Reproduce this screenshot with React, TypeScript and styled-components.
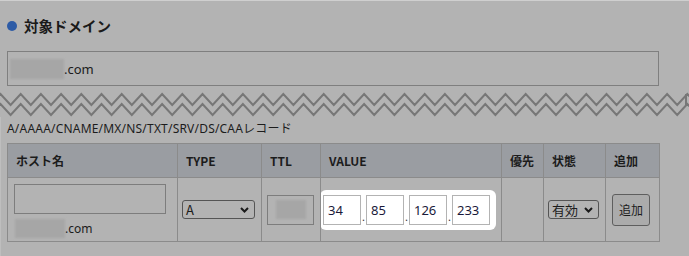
import React from "react";
import styled, { createGlobalStyle } from "styled-components";

const GlobalStyle = createGlobalStyle`
  html, body { margin: 0; padding: 0; background: #b3b3b3; }
  body {
    font-family: "Noto Sans", "Noto Sans CJK JP", sans-serif;
    color: #1c1c1c;
    width: 689px;
    height: 256px;
    overflow: hidden;
  }
`;

const Page = styled.div`
  width: 689px;
  height: 256px;
  border-top: 1px solid #cfcfcf;
  box-sizing: border-box;
  display: flex;
  flex-direction: column;
`;

const TopSection = styled.div`
  padding: 15px 0 0 7px;
  display: flex;
  flex-direction: column;
`;

const Heading = styled.h2`
  margin: 0;
  display: flex;
  align-items: center;
  gap: 7px;
  font-family: "Noto Sans CJK JP", sans-serif;
  font-size: 14.5px;
  font-weight: 700;
  line-height: 20px;
  height: 20px;
  color: #1a1a1a;
`;

const Dot = styled.span`
  width: 10px;
  height: 10px;
  border-radius: 50%;
  background: #2d5ba6;
`;

const DomainBox = styled.div`
  margin-top: 15px;
  width: 652px;
  height: 35px;
  box-sizing: border-box;
  border: 1px solid #7f7f7f;
  display: flex;
  align-items: center;
  padding-left: 2px;
  font-size: 13px;
`;

const Blur = styled.span<{ $w: number; $h: number }>`
  display: inline-block;
  width: ${(p) => p.$w}px;
  height: ${(p) => p.$h}px;
  background: #a6a6a6;
  filter: blur(1.2px);
`;

const Zig = styled.svg`
  display: block;
  margin-top: 4px;
`;

const BottomSection = styled.div`
  border-left: 1px solid #bebebe;
  padding-left: 6px;
  flex: 1;
  display: flex;
  flex-direction: column;
`;

const Caption = styled.div`
  margin-top: 4px;
  font-size: 12px;
  letter-spacing: 0.2px;
  line-height: 16px;
  height: 16px;
  font-family: "Noto Sans", "Noto Sans CJK JP", sans-serif;
`;

const Table = styled.table`
  margin-top: 6px;
  border-collapse: collapse;
  width: 652px;
  table-layout: fixed;
  font-size: 12px;
`;

const Th = styled.th<{ $w: number }>`
  width: ${(p) => p.$w}px;
  height: 34px;
  box-sizing: border-box;
  background: #9a9da2;
  border: 1px solid #8b8b8b;
  text-align: left;
  padding: 0 0 0 8px;
  font-weight: 700;
  font-family: "Noto Sans CJK JP", sans-serif;
  color: #1c1c1c;
`;

const Td = styled.td<{ $pad?: string }>`
  border: 1px solid #8b8b8b;
  height: 64px;
  box-sizing: border-box;
  padding: ${(p) => p.$pad || "0 0 0 5px"};
  vertical-align: middle;
`;

const HostCell = styled.div`
  display: flex;
  flex-direction: column;
  gap: 5px;
  padding-top: 5px;
  padding-bottom: 2px;
`;

const TextInput = styled.div<{ $w: number }>`
  width: ${(p) => p.$w}px;
  height: 30px;
  box-sizing: border-box;
  border: 1px solid #7d7d7d;
  display: flex;
  align-items: center;
  justify-content: center;
`;

const DomainLine = styled.div`
  display: flex;
  align-items: center;
  height: 19px;
  font-size: 12px;
  padding-left: 1px;
`;

const SelectBox = styled.div<{ $w: number }>`
  width: ${(p) => p.$w}px;
  height: 19px;
  box-sizing: border-box;
  border: 1px solid #555;
  border-radius: 3px;
  display: flex;
  align-items: center;
  justify-content: space-between;
  padding: 0 5px 0 3px;
  font-size: 13px;
  font-family: "Noto Sans CJK JP", sans-serif;
`;

const Highlight = styled.div`
  margin-left: -1px;
  width: 176px;
  height: 40px;
  box-sizing: border-box;
  background: #ffffff;
  border-radius: 6px;
  display: flex;
  align-items: center;
  padding-left: 3px;
`;

const OctetInput = styled.div`
  width: 38px;
  height: 30px;
  box-sizing: border-box;
  border: 1px solid #b3b3b3;
  display: flex;
  align-items: center;
  padding-left: 4px;
  font-size: 13px;
  color: #1a1a3a;
`;

const Sep = styled.span`
  width: 5px;
  text-align: center;
  font-size: 11px;
  align-self: flex-end;
  padding-bottom: 8px;
  line-height: 10px;
  color: #333;
`;

const AddButton = styled.div`
  width: 38px;
  height: 32px;
  box-sizing: border-box;
  border: 1px solid #5e5e5e;
  border-radius: 3px;
  background: #ababab;
  display: flex;
  align-items: center;
  justify-content: center;
  font-size: 12px;
  font-family: "Noto Sans CJK JP", sans-serif;
`;

const Chevron = () => (
  <svg width="9" height="6" viewBox="0 0 9 6">
    <path d="M1 1 L4.5 4.5 L8 1" fill="none" stroke="#1a1a1a" strokeWidth="2" />
  </svg>
);

const zigPath = (y0: number) => {
  const pts: string[] = [];
  const period = 20.2;
  const start = 0.5 - period;
  for (let x = start; x < 700; x += period / 2) {
    const i = Math.round((x - start) / (period / 2));
    const y = i % 2 === 0 ? y0 : y0 + 11;
    pts.push(`${x.toFixed(1)},${y}`);
  }
  return "M" + pts.join(" L");
};

const ZigZag = () => (
  <Zig width="689" height="27" viewBox="0 0 689 27">
    <path d={zigPath(4)} fill="none" stroke="#777" strokeWidth="2" />
    <path d={zigPath(14)} fill="none" stroke="#777" strokeWidth="2" />
    <path d="M686 4 L686 16" fill="none" stroke="#777" strokeWidth="2" />
  </Zig>
);

export default function App() {
  return (
    <>
      <GlobalStyle />
      <Page>
        <TopSection>
          <Heading>
            <Dot />
            対象ドメイン
          </Heading>
          <DomainBox>
            <Blur $w={54} $h={20} />
            .com
          </DomainBox>
        </TopSection>
        <ZigZag />
        <BottomSection>
          <Caption>A/AAAA/CNAME/MX/NS/TXT/SRV/DS/CAAレコード</Caption>
          <Table>
            <thead>
              <tr>
                <Th $w={170}>ホスト名</Th>
                <Th $w={84}>TYPE</Th>
                <Th $w={59}>TTL</Th>
                <Th $w={181}>VALUE</Th>
                <Th $w={42}>優先</Th>
                <Th $w={62}>状態</Th>
                <Th $w={54}>追加</Th>
              </tr>
            </thead>
            <tbody>
              <tr>
                <Td $pad="0 0 0 6px">
                  <HostCell>
                    <TextInput $w={152} />
                    <DomainLine>
                      <Blur $w={50} $h={19} />
                      .com
                    </DomainLine>
                  </HostCell>
                </Td>
                <Td $pad="0 0 0 4px">
                  <SelectBox $w={73}>
                    <span>A</span>
                    <Chevron />
                  </SelectBox>
                </Td>
                <Td $pad="0 0 0 5px">
                  <TextInput $w={47}>
                    <Blur $w={30} $h={19} />
                  </TextInput>
                </Td>
                <Td $pad="0">
                  <Highlight>
                    <OctetInput>34</OctetInput>
                    <Sep>.</Sep>
                    <OctetInput>85</OctetInput>
                    <Sep>.</Sep>
                    <OctetInput>126</OctetInput>
                    <Sep>.</Sep>
                    <OctetInput>233</OctetInput>
                  </Highlight>
                </Td>
                <Td />
                <Td $pad="0 0 0 4px">
                  <SelectBox $w={51}>
                    <span>有効</span>
                    <Chevron />
                  </SelectBox>
                </Td>
                <Td $pad="0 0 0 6px">
                  <AddButton>追加</AddButton>
                </Td>
              </tr>
            </tbody>
          </Table>
        </BottomSection>
      </Page>
    </>
  );
}
